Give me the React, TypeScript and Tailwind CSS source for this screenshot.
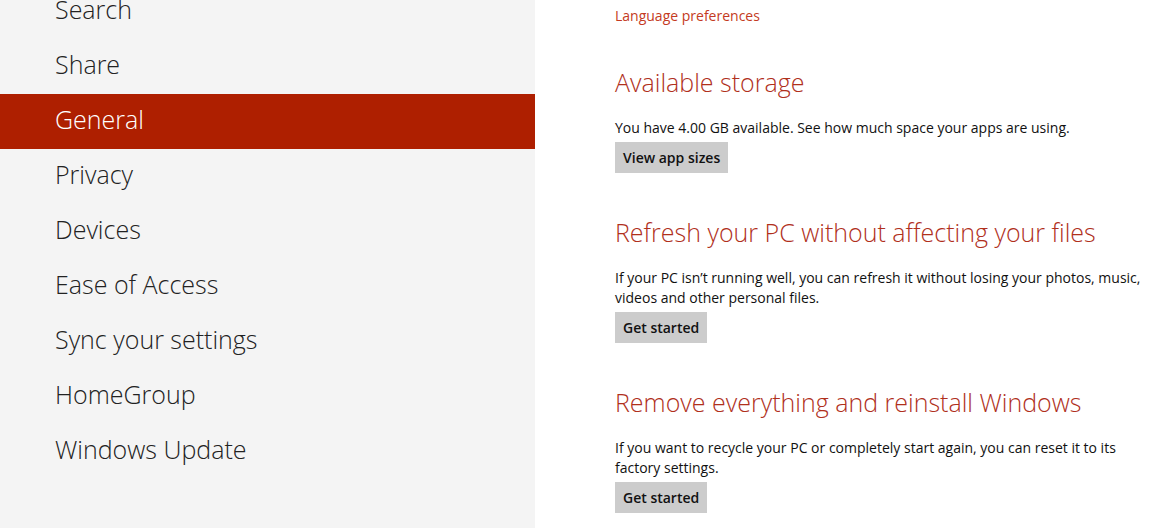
import React from "react";

const menuItems = [
  "Search",
  "Share",
  "General",
  "Privacy",
  "Devices",
  "Ease of Access",
  "Sync your settings",
  "HomeGroup",
  "Windows Update",
];

type Section = {
  title: string;
  body: string;
  action: string;
};

const sections: Section[] = [
  {
    title: "Available storage",
    body: "You have 4.00 GB available. See how much space your apps are using.",
    action: "View app sizes",
  },
  {
    title: "Refresh your PC without affecting your files",
    body: "If your PC isn\u2019t running well, you can refresh it without losing your photos, music, videos and other personal files.",
    action: "Get started",
  },
  {
    title: "Remove everything and reinstall Windows",
    body: "If you want to recycle your PC or completely start again, you can reset it to its factory settings.",
    action: "Get started",
  },
];

const App = () => {
  const selected = "General";

  return (
    <div className="flex h-[528px] w-full overflow-hidden bg-white font-['Open_Sans','Noto_Sans',sans-serif]">
      {/* SETTINGS MENU */}
      <div className="w-[535px] shrink-0 bg-[#f4f4f4]">
        <ul className="mt-[-16px]">
          {menuItems.map((item) => (
            <li
              key={item}
              className={`flex h-[55px] items-center pb-[4px] pl-[55px] text-[25px] font-light ${
                item === selected
                  ? "bg-[#ae1f00] text-white"
                  : "text-[#222222]"
              }`}
            >
              {item}
            </li>
          ))}
        </ul>
      </div>

      {/* DETAILS */}
      <div className="flex-1 pl-[80px] pt-[3px]">
        <a className="text-[14px] leading-5 text-[#c43a22]">
          Language preferences
        </a>
        {sections.map((s, i) => (
          <div key={s.title} className={i === 0 ? "mt-[38px]" : "mt-[42px]"}>
            <h2 className="text-[25px] font-light leading-[34px] text-[#b0301c]">
              {s.title}
            </h2>
            <p className="mt-[19px] max-w-[540px] text-[14px] leading-5 text-[#111111]">
              {s.body}
            </p>
            <button className="mt-[4px] h-[31px] bg-[#cccccc] px-[8px] text-[14px] font-semibold text-[#111111]">
              {s.action}
            </button>
          </div>
        ))}
      </div>
    </div>
  );
};

export default App;
